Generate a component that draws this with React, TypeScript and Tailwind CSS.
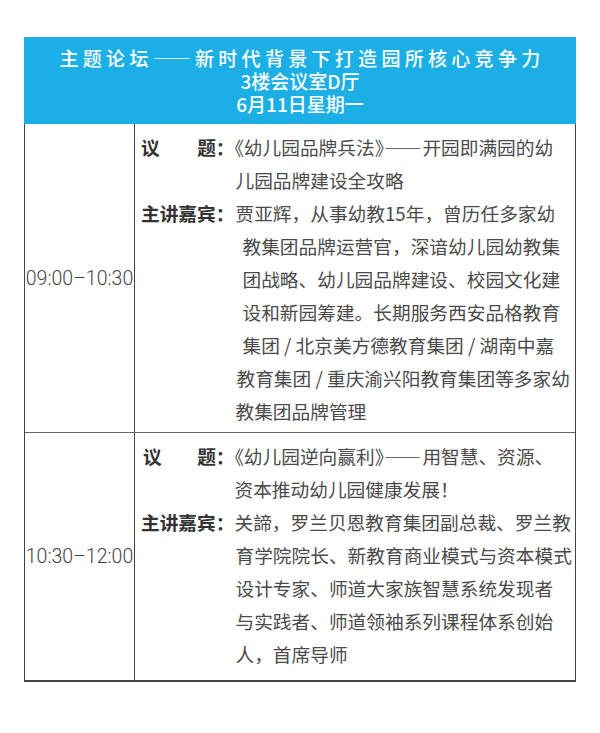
import React from "react";

type Line = { t: React.ReactNode; o: string };

const Q = ({ c }: { c: string }) => (
  <span className="[font-feature-settings:'halt']">{c}</span>
);

const D = () => <span className="tracking-[1px]">――</span>;

const row1Topic: Line[] = [
  {
    t: (
      <>
        <Q c="《" />幼儿园品牌兵法<Q c="》" />
        <D />开园即满园的幼
      </>
    ),
    o: "pl-0",
  },
  { t: "儿园品牌建设全攻略", o: "pl-[1px]" },
];

const row1Speaker: Line[] = [
  { t: "贾亚辉，从事幼教15年，曾历任多家幼", o: "pl-[1px]" },
  { t: "教集团品牌运营官，深谙幼儿园幼教集", o: "pl-[8px]" },
  { t: "团战略、幼儿园品牌建设、校园文化建", o: "pl-[8px]" },
  { t: "设和新园筹建。长期服务西安品格教育", o: "pl-[8px]" },
  { t: "集团 / 北京美方德教育集团 / 湖南中嘉", o: "pl-[8px]" },
  { t: "教育集团 / 重庆渝兴阳教育集团等多家幼", o: "pl-[2px]" },
  { t: "教集团品牌管理", o: "pl-[1px]" },
];

const row2Topic: Line[] = [
  {
    t: (
      <>
        <Q c="《" />幼儿园逆向赢利<Q c="》" />
        <D />用智慧、资源、
      </>
    ),
    o: "pl-0",
  },
  { t: "资本推动幼儿园健康发展！", o: "pl-0" },
];

const row2Speaker: Line[] = [
  { t: "关諦，罗兰贝恩教育集团副总裁、罗兰教", o: "pl-0" },
  { t: "育学院院长、新教育商业模式与资本模式", o: "pl-[1px]" },
  { t: "设计专家、师道大家族智慧系统发现者", o: "pl-[1px]" },
  { t: "与实践者、师道领袖系列课程体系创始", o: "pl-[1px]" },
  { t: "人，首席导师", o: "pl-[1px]" },
];

function Lines({ lines }: { lines: Line[] }) {
  return (
    <div className="flex-1 text-[#4a4a4a]">
      {lines.map((l, i) => (
        <div key={i} className={`whitespace-nowrap ${l.o}`}>
          {l.t}
        </div>
      ))}
    </div>
  );
}

function TopicLabel({ extra }: { extra: string }) {
  return (
    <div className={`w-[93.5px] shrink-0 flex justify-between font-bold text-[#333] ${extra}`}>
      <span>议</span>
      <span>题：</span>
    </div>
  );
}

function SpeakerLabel() {
  return (
    <div className="w-[93.5px] shrink-0 font-bold text-[#333] whitespace-nowrap">
      主讲嘉宾：
    </div>
  );
}

export default function App() {
  return (
    <div className="w-[600px] h-[733px] bg-white pt-[37px] pl-[24px] font-['Noto_Sans_CJK_SC',sans-serif]">
      <div className="w-[552px]">
        <div className="h-[87px] bg-[#1cafe6] text-white flex flex-col items-center justify-center leading-[23px] font-medium">
          <div className="text-[19px] tracking-[4.3px] pl-[4px] whitespace-nowrap">
            主题论坛――新时代背景下打造园所核心竞争力
          </div>
          <div className="text-[19px]">3楼会议室D厅</div>
          <div className="text-[19px]">6月11日星期一</div>
        </div>
        <div className="border-l border-r border-b-2 border-[#444] text-[18.7px] leading-[33px]">
          <div className="flex border-b border-[#666]">
            <div className="w-[110px] shrink-0 border-r border-[#444] flex items-center justify-center font-['Roboto',sans-serif] font-light text-[19.5px] text-[#444] whitespace-nowrap">
              09:00–10:30
            </div>
            <div className="flex-1 pl-[6px] pt-[6px] pb-[5px]">
              <div className="flex">
                <TopicLabel extra="" />
                <Lines lines={row1Topic} />
              </div>
              <div className="flex">
                <SpeakerLabel />
                <Lines lines={row1Speaker} />
              </div>
            </div>
          </div>
          <div className="flex">
            <div className="w-[110px] shrink-0 border-r border-[#444] flex items-center justify-center font-['Roboto',sans-serif] font-light text-[19.5px] text-[#444] whitespace-nowrap">
              10:30–12:00
            </div>
            <div className="flex-1 pl-[6px] pt-[6px] pb-[10px]">
              <div className="flex">
                <TopicLabel extra="pl-[2px]" />
                <Lines lines={row2Topic} />
              </div>
              <div className="flex">
                <SpeakerLabel />
                <Lines lines={row2Speaker} />
              </div>
            </div>
          </div>
        </div>
      </div>
    </div>
  );
}
